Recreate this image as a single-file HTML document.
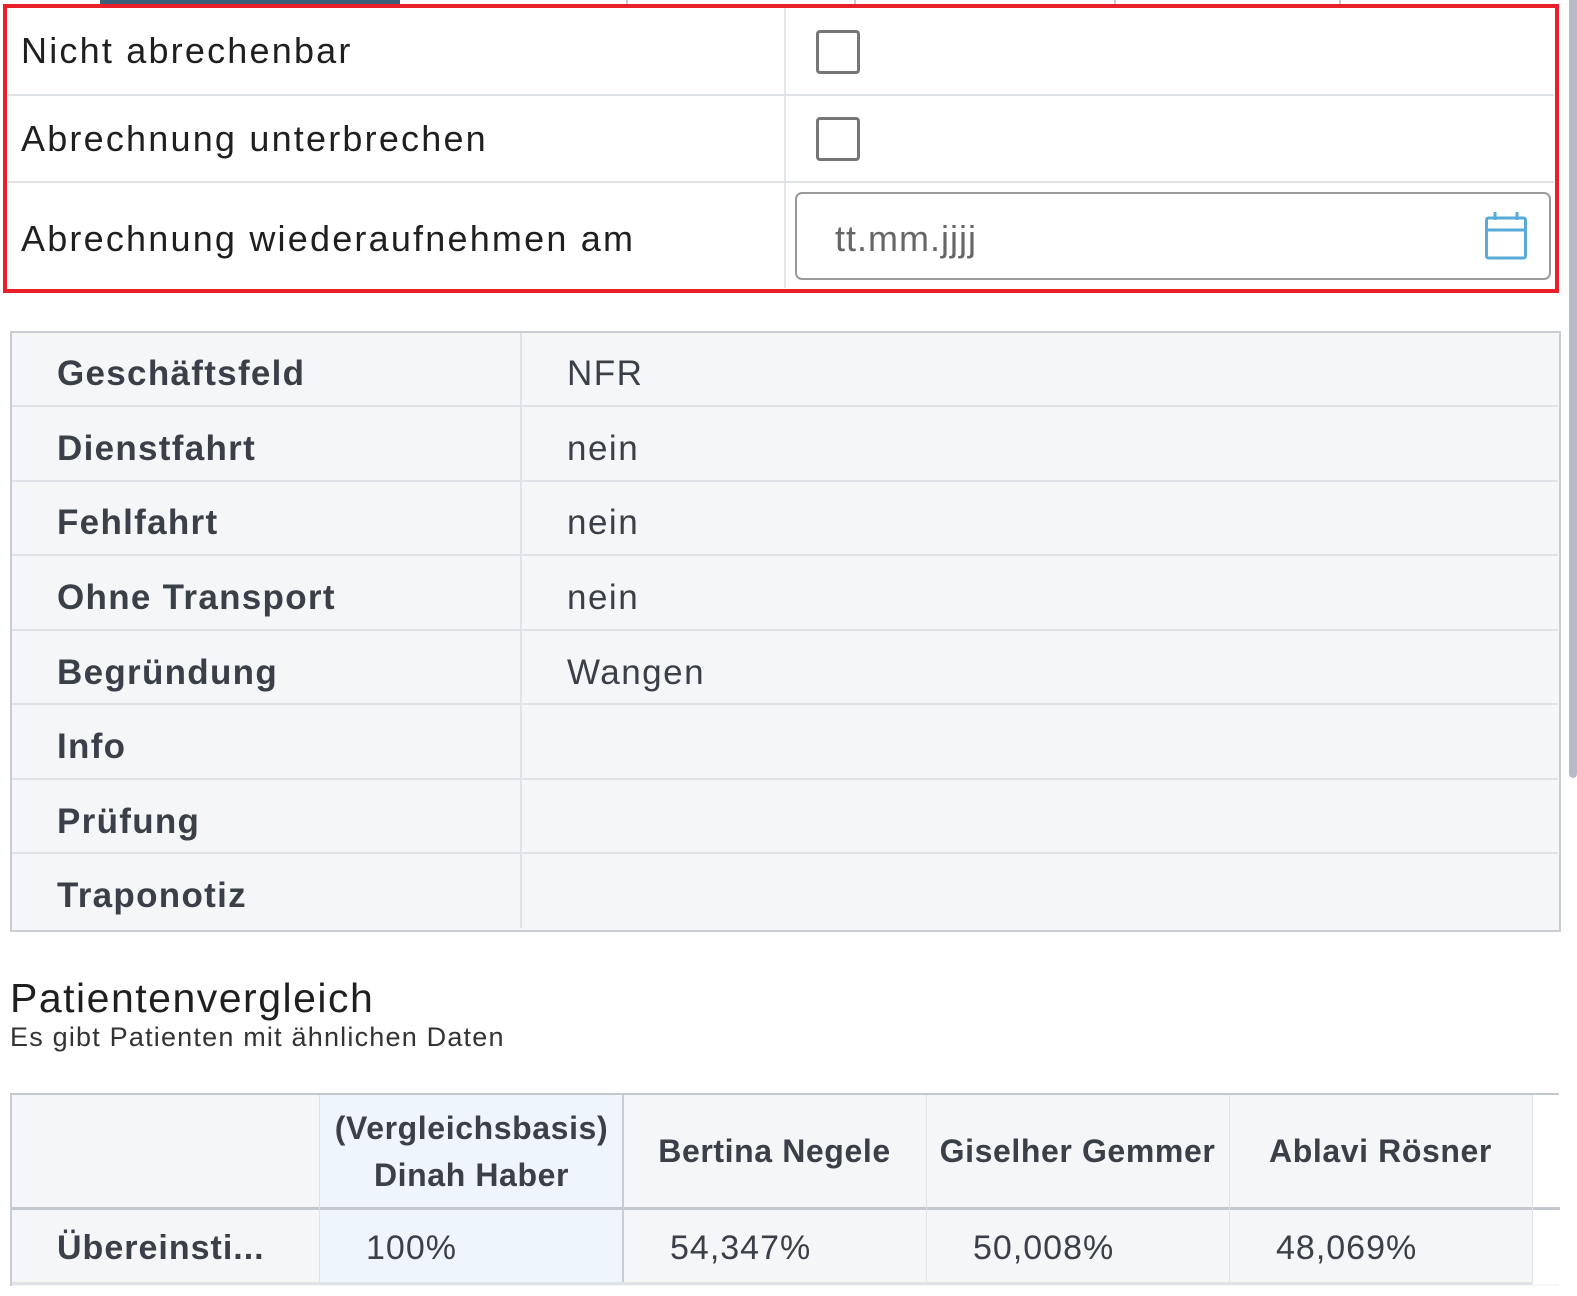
<!DOCTYPE html>
<html><head><meta charset="utf-8"><style>
body{margin:0;width:1577px;height:1296px;background:#fff;position:relative;overflow:hidden;font-family:"Liberation Sans",sans-serif;color:#212529}
.a{position:absolute}
.lbl{position:absolute;left:21px;font-size:36px;color:#1f1f1f;letter-spacing:2.2px}
.cb{position:absolute;left:816px;width:38px;height:38px;border:3px solid #767676;border-radius:4px}
.t2l{position:absolute;left:57px;font-size:35px;font-weight:bold;color:#3b4048;letter-spacing:1.3px}
.t2v{position:absolute;left:567px;font-size:35px;color:#3b4048;letter-spacing:1.5px}
.hl{position:absolute;left:12px;width:1546px;height:2px;background:#dfe2e6}
.th{position:absolute;top:1095px;height:113px;display:flex;align-items:center;justify-content:center;text-align:center;font-size:32px;font-weight:bold;color:#3b4048;line-height:47px;letter-spacing:0.6px}
.td{position:absolute;top:1212px;height:72px;display:flex;align-items:center;font-size:34px;color:#3b4048;letter-spacing:1px}
</style></head><body>
<div class="a" style="left:100px;top:0;width:300px;height:5px;background:#3a5f7d"></div>
<div class="a" style="left:626px;top:0;width:2px;height:5px;background:#ccc"></div>
<div class="a" style="left:854px;top:0;width:2px;height:5px;background:#ccc"></div>
<div class="a" style="left:1114px;top:0;width:2px;height:5px;background:#ccc"></div>
<div class="a" style="left:1339px;top:0;width:2px;height:5px;background:#ccc"></div>
<div class="a" style="left:1569px;top:0;width:8px;height:778px;background:#b5bcc6;border-radius:0 0 4px 4px"></div>

<div class="a" style="left:3px;top:4px;width:1548px;height:281px;border:4px solid #e8202a"></div>
<div class="a" style="left:784px;top:8px;width:2px;height:280px;background:#e3e6ea"></div>
<div class="hl" style="left:8px;width:1546px;top:94px"></div>
<div class="hl" style="left:8px;width:1546px;top:181px"></div>
<div class="lbl" style="top:30px">Nicht abrechenbar</div>
<div class="lbl" style="top:118px">Abrechnung unterbrechen</div>
<div class="lbl" style="top:218px">Abrechnung wiederaufnehmen am</div>
<div class="cb" style="top:30px"></div>
<div class="cb" style="top:117px"></div>
<div class="a" style="left:795px;top:192px;width:752px;height:84px;border:2px solid #9a9a9a;border-radius:7px"></div>
<div class="a" style="left:835px;top:218px;font-size:36px;color:#666;letter-spacing:1px">tt.mm.jjjj</div>
<svg class="a" style="left:1484px;top:211px" width="44" height="50" viewBox="0 0 44 50"><rect x="2.5" y="7" width="39" height="40" rx="2" fill="none" stroke="#5aaad8" stroke-width="3"/><line x1="2.5" y1="19" x2="41.5" y2="19" stroke="#5aaad8" stroke-width="3"/><line x1="11" y1="1" x2="11" y2="9" stroke="#5aaad8" stroke-width="3"/><line x1="33" y1="1" x2="33" y2="9" stroke="#5aaad8" stroke-width="3"/></svg>

<div class="a" style="left:10px;top:331px;width:1547px;height:597px;border:2px solid #c9cdd2;background:#f5f6f8"></div>
<div class="a" style="left:520px;top:333px;width:2px;height:595px;background:#dfe2e6"></div>
<div class="hl" style="top:405px"></div><div class="hl" style="top:480px"></div><div class="hl" style="top:554px"></div><div class="hl" style="top:629px"></div><div class="hl" style="top:703px"></div><div class="hl" style="top:778px"></div><div class="hl" style="top:852px"></div>
<div class="t2l" style="top:354px">Geschäftsfeld</div><div class="t2v" style="top:354px">NFR</div>
<div class="t2l" style="top:429px">Dienstfahrt</div><div class="t2v" style="top:429px">nein</div>
<div class="t2l" style="top:503px">Fehlfahrt</div><div class="t2v" style="top:503px">nein</div>
<div class="t2l" style="top:578px">Ohne Transport</div><div class="t2v" style="top:578px">nein</div>
<div class="t2l" style="top:653px">Begründung</div><div class="t2v" style="top:653px">Wangen</div>
<div class="t2l" style="top:727px">Info</div>
<div class="t2l" style="top:802px">Prüfung</div>
<div class="t2l" style="top:876px">Traponotiz</div>

<div class="a" style="left:10px;top:975px;font-size:41px;color:#1f1f1f;letter-spacing:1.5px">Patientenvergleich</div>
<div class="a" style="left:10px;top:1022px;font-size:27px;color:#333;letter-spacing:1.2px">Es gibt Patienten mit ähnlichen Daten</div>

<div class="a" style="left:10px;top:1093px;width:1547px;height:191px;border-top:2px solid #c3c8ce;border-left:2px solid #c9cdd2;background:#f5f6f8"></div>
<div class="a" style="left:1533px;top:1095px;width:27px;height:189px;background:#fff"></div>
<div class="a" style="left:320px;top:1095px;width:303px;height:187px;background:#eef5fc"></div>
<div class="a" style="left:12px;top:1207px;width:1548px;height:3px;background:#c3c8ce"></div>
<div class="a" style="left:12px;top:1282px;width:1521px;height:3px;background:#dfe2e6"></div>
<div class="a" style="left:319px;top:1095px;width:1px;height:187px;background:#dfe2e6"></div>
<div class="a" style="left:622px;top:1095px;width:2px;height:187px;background:#c9cdd2"></div>
<div class="a" style="left:926px;top:1095px;width:1px;height:187px;background:#dfe2e6"></div>
<div class="a" style="left:1229px;top:1095px;width:1px;height:187px;background:#dfe2e6"></div>
<div class="a" style="left:1532px;top:1095px;width:1px;height:187px;background:#dfe2e6"></div>
<div class="th" style="left:320px;width:303px">(Vergleichsbasis)<br>Dinah Haber</div>
<div class="th" style="left:623px;width:303px">Bertina Negele</div>
<div class="th" style="left:926px;width:303px">Giselher Gemmer</div>
<div class="th" style="left:1229px;width:303px">Ablavi Rösner</div>
<div class="td" style="left:57px;font-weight:bold">Übereinsti...</div>
<div class="td" style="left:366px">100%</div>
<div class="td" style="left:670px">54,347%</div>
<div class="td" style="left:973px">50,008%</div>
<div class="td" style="left:1276px">48,069%</div>
</body></html>
